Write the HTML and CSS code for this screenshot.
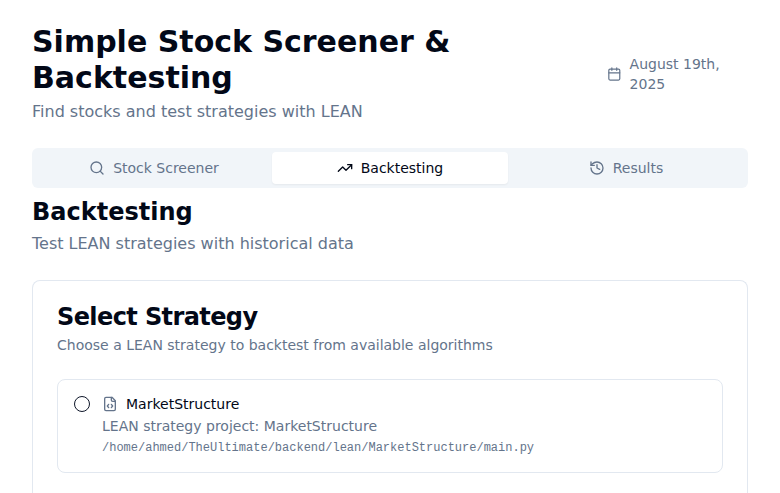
FILE: index.html
```html
<!DOCTYPE html>
<html lang="en">
<head>
<meta charset="utf-8">
<title>Simple Stock Screener &amp; Backtesting</title>
<link rel="stylesheet" href="styles.css">
</head>
<body>
<main class="page">
  <header class="header">
    <div>
      <h1>Simple Stock Screener &amp; Backtesting</h1>
      <p class="lead">Find stocks and test strategies with LEAN</p>
    </div>
    <div class="date">
      <svg class="icon" viewBox="0 0 24 24"><path d="M8 2v4M16 2v4M3 10h18"/><rect x="3" y="4" width="18" height="18" rx="2"/></svg>
      <span>August 19th, 2025</span>
    </div>
  </header>
  <nav class="tabs">
    <button class="tab"><svg class="icon" viewBox="0 0 24 24"><circle cx="11" cy="11" r="8"/><path d="m21 21-4.3-4.3"/></svg>Stock Screener</button>
    <button class="tab active"><svg class="icon" viewBox="0 0 24 24"><path d="m22 7-8.5 8.5-5-5L2 17"/><path d="M16 7h6v6"/></svg>Backtesting</button>
    <button class="tab"><svg class="icon" viewBox="0 0 24 24"><path d="M3 12a9 9 0 1 0 9-9 9.75 9.75 0 0 0-6.74 2.74L3 8"/><path d="M3 3v5h5M12 7v5l4 2"/></svg>Results</button>
  </nav>
  <section class="content">
    <h2>Backtesting</h2>
    <p class="lead">Test LEAN strategies with historical data</p>
    <div class="card">
      <h3>Select Strategy</h3>
      <p class="description">Choose a LEAN strategy to backtest from available algorithms</p>
      <div class="strategy">
        <button class="radio" aria-label="MarketStructure"></button>
        <div>
          <div class="name"><svg class="icon" viewBox="0 0 24 24"><path d="M10 12.5 8 15l2 2.5M14 12.5l2 2.5-2 2.5M14 2v4a2 2 0 0 0 2 2h4"/><path d="M15 2H6a2 2 0 0 0-2 2v16a2 2 0 0 0 2 2h12a2 2 0 0 0 2-2V7z"/></svg>MarketStructure</div>
          <p class="summary">LEAN strategy project: MarketStructure</p>
          <p class="path">/home/ahmed/TheUltimate/backend/lean/MarketStructure/main.py</p>
        </div>
      </div>
    </div>
  </section>
</main>
</body>
</html>
```
FILE: styles.css
```css
* { box-sizing: border-box; margin: 0; padding: 0; }
body {
  background: #fff;
  color: #020817;
  font: 16px/24px "DejaVu Sans", sans-serif;
}
button { font: inherit; color: inherit; border: 0; background: none; }
.page {
  display: flex;
  flex-direction: column;
  height: 100vh;
  padding: 24px 32px 0;
}
.icon {
  width: 16px;
  height: 16px;
  flex: none;
  fill: none;
  stroke: currentColor;
  stroke-width: 2;
  stroke-linecap: round;
  stroke-linejoin: round;
}
.header { display: flex; align-items: center; justify-content: space-between; }
h1 { font-size: 30px; line-height: 36px; width: 480px; }
.lead { color: #64748b; margin-top: 4px; }
.date {
  display: flex;
  align-items: center;
  gap: 8px;
  width: 141px;
  color: #64748b;
  font-size: 14px;
  line-height: 20px;
}
.date .icon { width: 14.6px; }
.tabs {
  display: grid;
  grid-template-columns: repeat(3, 1fr);
  height: 40px;
  margin-top: 24px;
  padding: 4px;
  background: #f1f5f9;
  border-radius: 6px;
  color: #64748b;
}
.tab {
  display: flex;
  align-items: center;
  justify-content: center;
  gap: 8px;
  font-size: 14px;
  line-height: 20px;
  border-radius: 4px;
}
.active { background: #fff; color: #020817; box-shadow: 0 1px 2px rgb(0 0 0 / 5%); }
.content { display: flex; flex-direction: column; flex: 1; padding-top: 8px; }
h2, h3 { font-size: 24px; line-height: 32px; }
.card {
  flex: 1;
  margin-top: 24px;
  padding: 24px 24px 0;
  border: 1px solid #e2e8f0;
  border-bottom: 0;
  border-radius: 8px 8px 0 0;
}
h3 { line-height: 24px; letter-spacing: -0.6px; }
.description { margin-top: 6px; color: #64748b; font-size: 14px; line-height: 20px; }
.strategy {
  display: flex;
  gap: 12px;
  margin-top: 24px;
  padding: 16px;
  border: 1px solid #e2e8f0;
  border-radius: 8px;
}
.radio { width: 16px; height: 16px; flex: none; border: 1px solid #0f172a; border-radius: 50%; }
.name { display: flex; align-items: center; gap: 8px; font-size: 14px; line-height: 16px; }
.name .icon { color: #64748b; }
.summary { margin-top: 4px; color: #64748b; font-size: 14px; line-height: 20px; }
.path { margin-top: 4px; color: #64748b; font: 12px/16px "Liberation Mono", monospace; }
```
